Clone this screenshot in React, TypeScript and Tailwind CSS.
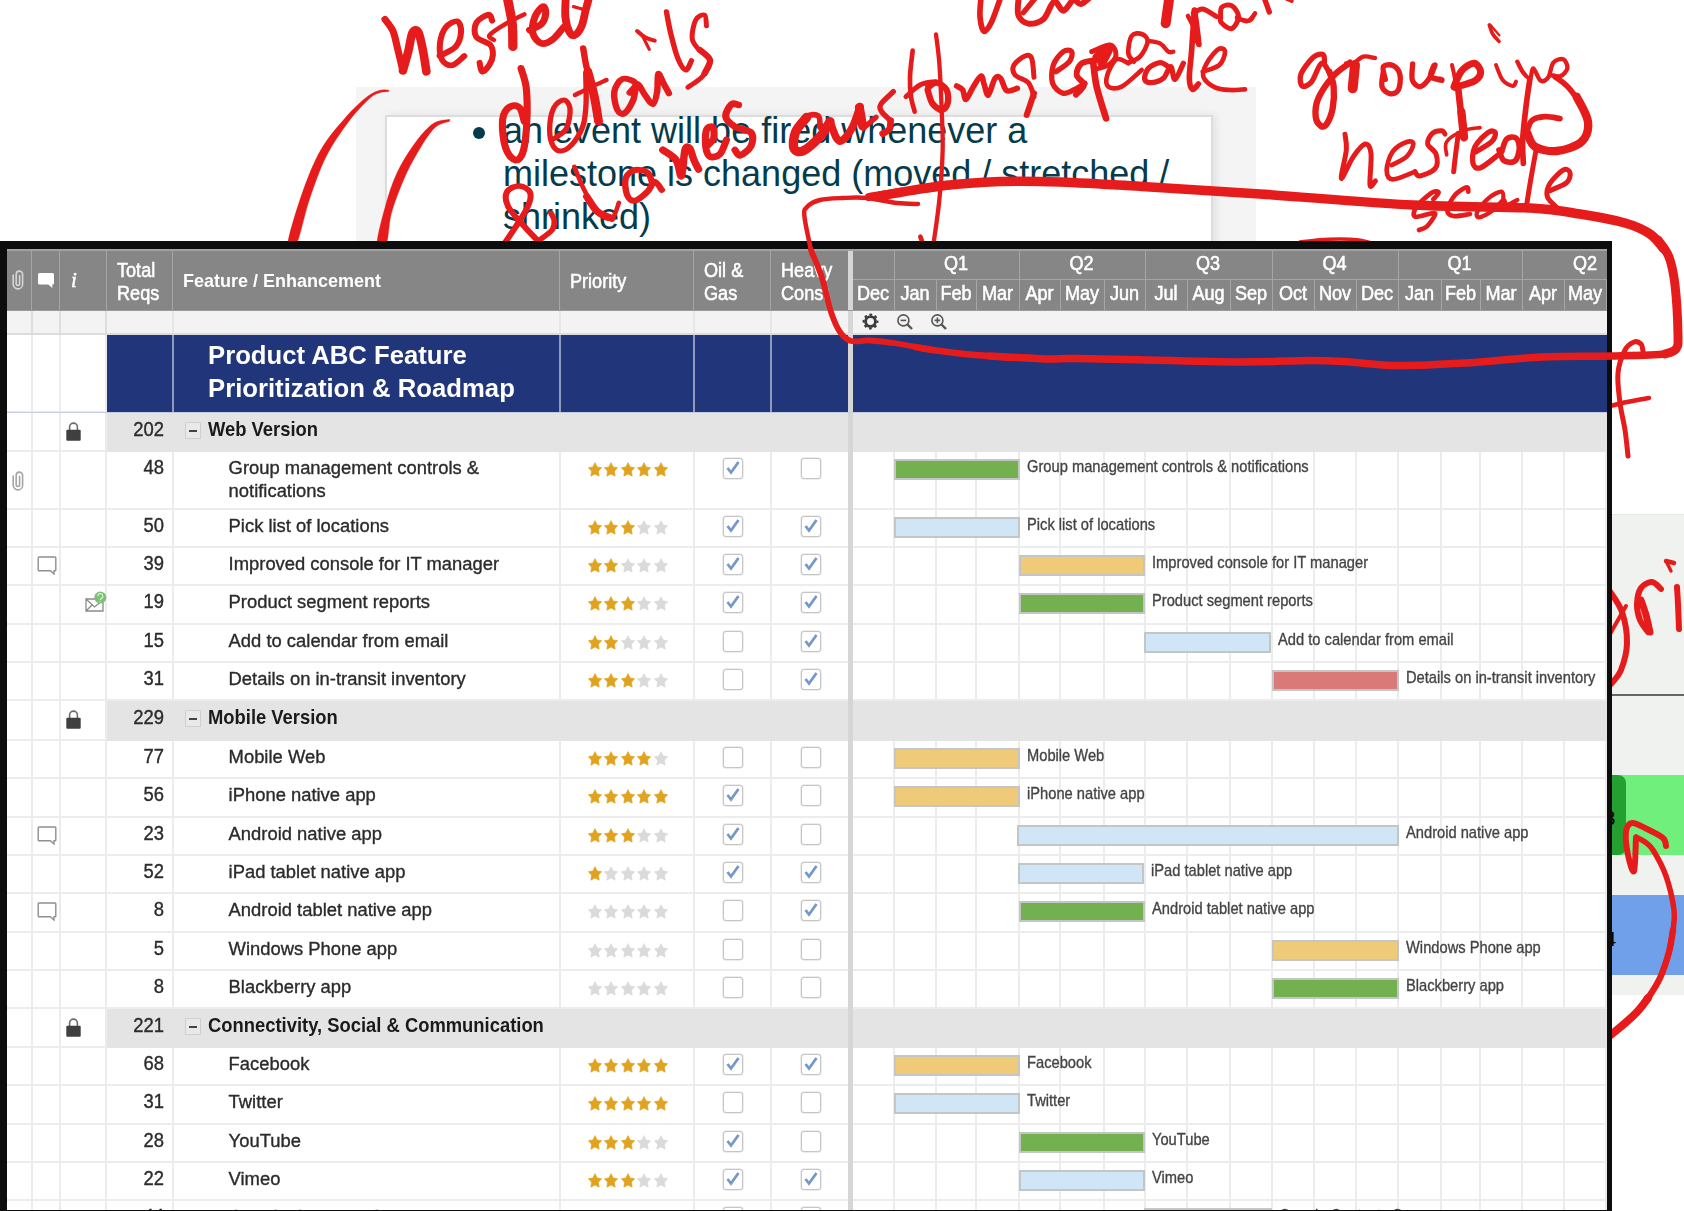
import React from "react";

/* ---------- data ---------- */

type Color = "green" | "blue" | "yellow" | "red";
type Row = {
  kind: "section" | "item";
  h: number;
  reqs: string;
  name: string;
  stars?: number;
  oil?: boolean;
  heavy?: boolean;
  clip?: boolean;
  comment?: boolean;
  mail?: boolean;
  bar?: [number, number, Color];
};

const item = (
  h: number,
  reqs: string,
  name: string,
  stars: number,
  oil: boolean,
  heavy: boolean,
  bar: [number, number, Color],
  extra: Partial<Row> = {},
): Row => ({ kind: "item", h, reqs, name, stars, oil, heavy, bar, ...extra });

const section = (h: number, reqs: string, name: string): Row => ({ kind: "section", h, reqs, name });

const rows: Row[] = [
  section(39, "202", "Web Version"),
  item(58, "48", "Group management controls & notifications", 5, true, false, [894, 1019, "green"], { clip: true }),
  item(38, "50", "Pick list of locations", 3, true, true, [894, 1019, "blue"]),
  item(38, "39", "Improved console for IT manager", 2, true, true, [1019, 1144, "yellow"], { comment: true }),
  item(39, "19", "Product segment reports", 3, true, true, [1019, 1144, "green"], { mail: true }),
  item(38, "15", "Add to calendar from email", 2, false, true, [1144, 1270, "blue"]),
  item(38, "31", "Details on in-transit inventory", 3, false, true, [1272, 1398, "red"]),
  section(40, "229", "Mobile Version"),
  item(38, "77", "Mobile Web", 4, false, false, [894, 1019, "yellow"]),
  item(39, "56", "iPhone native app", 5, true, false, [894, 1019, "yellow"]),
  item(38, "23", "Android native app", 3, true, false, [1017, 1398, "blue"], { comment: true }),
  item(38, "52", "iPad tablet native app", 1, true, true, [1018, 1143, "blue"]),
  item(39, "8", "Android tablet native app", 0, false, true, [1019, 1144, "green"], { comment: true }),
  item(38, "5", "Windows Phone app", 0, false, false, [1272, 1398, "yellow"]),
  item(38, "8", "Blackberry app", 0, false, false, [1272, 1398, "green"]),
  section(39, "221", "Connectivity, Social & Communication"),
  item(38, "68", "Facebook", 5, true, true, [894, 1019, "yellow"]),
  item(39, "31", "Twitter", 5, false, false, [894, 1019, "blue"]),
  item(38, "28", "YouTube", 3, true, false, [1019, 1144, "green"]),
  item(38, "22", "Vimeo", 3, true, true, [1019, 1144, "blue"]),
  item(39, "44", "Google Contacts Sync", 3, false, false, [1144, 1271, "green"]),
];

const months: [string, number][] = [
  ["Dec", 42], ["Jan", 42], ["Feb", 40], ["Mar", 43], ["Apr", 41], ["May", 44],
  ["Jun", 41], ["Jul", 42], ["Aug", 43], ["Sep", 42], ["Oct", 42], ["Nov", 42],
  ["Dec", 42], ["Jan", 43], ["Feb", 39], ["Mar", 42], ["Apr", 42], ["May", 42],
];
const quarters: [string, number][] = [
  ["", 42], ["Q1", 125], ["Q2", 126], ["Q3", 127], ["Q4", 126], ["Q1", 124], ["Q2", 127],
];

const barColor: Record<Color, string> = {
  green: "bg-[#73b04f]",
  blue: "bg-[#d0e5f6]",
  yellow: "bg-[#efcb79]",
  red: "bg-[#da7a78]",
};

/* ---------- icons ---------- */

const Clip = ({ className }: { className: string }) => (
  <svg viewBox="0 0 12 20" className={className} fill="none" stroke="currentColor" strokeWidth="1.6" strokeLinecap="round">
    <path d="M1.2 5v9.200a4.700 4.700 0 0 0 9.400 0V4.300a3.200 3.200 0 0 0-6.400 0v9.400a1.700 1.700 0 0 0 3.400 0V5.600" />
  </svg>
);
const CommentSolid = () => (
  <svg viewBox="0 0 16 15" className="h-[15px] w-[16px] text-white" fill="currentColor">
    <path d="M1.5 0h13Q16 0 16 1.5v8.700Q16 11.500 14.500 11.500h-.2V15l-4-3.500H1.500Q0 11.500 0 10V1.500Q0 0 1.500 0Z" />
  </svg>
);
const CommentOutline = () => (
  <svg viewBox="0 0 20 19" className="h-[19px] w-[20px]" fill="none" stroke="#8f8f8f" strokeWidth="1.400">
    <path d="M2 1h16q.8 0 .8.800V14q0 .800-.800.800h-1V18l-3.600-3.200H2q-.8 0-.8-.8V1.800Q1.200 1 2 1Z" />
  </svg>
);
const Lock = () => (
  <svg viewBox="0 0 15 19" className="h-[19px] w-[15px]">
    <path d="M3.600 9V5a3.900 3.900 0 0 1 7.800 0v4" fill="none" stroke="#6b6b6b" strokeWidth="1.600" />
    <rect x="0.300" y="7.800" width="14.400" height="11" rx="1" fill="#3f3f3f" />
  </svg>
);
const Mail = () => (
  <svg viewBox="0 0 22 21" className="h-[21px] w-[22px]" fill="none">
    <path d="M1 8h17v12H1zM1 8l8.500 8L18 9M1 20l6-6" stroke="#8a8a8a" strokeWidth="1.300" />
    <circle cx="15.300" cy="6.500" r="6" fill="#80bf78" />
    <path d="M12.800 5.200a2.500 2.500 0 1 1 3.600 2.200q-1.100.600-1.100 1.600M15.300 10.300v.8" stroke="#d8efd5" strokeWidth="1.200" />
  </svg>
);
const Star = ({ on }: { on: boolean }) => (
  <svg
    viewBox="0 0 24 24"
    className="h-[15px] w-[14px]"
    preserveAspectRatio="none"
    fill={on ? "#e0a320" : "#dadada"}
    stroke={on ? "#e0a320" : "#dadada"}
    strokeWidth="1.200"
    strokeLinejoin="round"
  >
    <path d="M12 1l3.600 7 7.700 1.100-5.500 5.500 1.300 8L12 19 4.900 22.600l1.300-8-5.500-5.500L8.400 8Z" />
  </svg>
);
const Gear = () => (
  <svg viewBox="0 0 18 18" className="h-[17px] w-[17px]" fill="none" stroke="#3c3c3c">
    <circle cx="9" cy="9" r="5.200" strokeWidth="3" />
    <circle cx="9" cy="9" r="7.300" strokeWidth="2.200" strokeDasharray="2.870 2.870" strokeDashoffset="1.400" />
  </svg>
);
const Magnifier = ({ plus }: { plus?: boolean }) => (
  <svg viewBox="0 0 16 16" className="h-4 w-4" fill="none" stroke="#555" strokeWidth="1.600">
    <circle cx="6.400" cy="6.400" r="5.500" />
    <path d="M10.500 10.500l4.500 4.500" strokeWidth="2.400" />
    <path d={plus ? "M3.600 6.400h5.600M6.400 3.600v5.600" : "M3.600 6.400h5.600"} />
  </svg>
);

const Check = ({ on }: { on?: boolean }) => (
  <div className="mt-[5.500px] flex h-[21.500px] w-[20px] items-center justify-center rounded-[3px] border-[1.500px] border-[#c6c6c6] bg-white shadow-[0_0_0_0.500px_#dcdcdc]">
    {on && (
      <svg viewBox="0 0 14 14" className="h-[14px] w-[14px]" fill="none" stroke="#7598cb" strokeWidth="2.800">
        <path d="M1.500 7l3.500 4.500L12.500 1" />
      </svg>
    )}
  </div>
);

/* ---------- spreadsheet ---------- */

const T = ({ children, className = "" }: { children: React.ReactNode; className?: string }) => (
  <span className={`block scale-y-[1.070] whitespace-nowrap ${className}`}>{children}</span>
);

const line = "shrink-0 border-r-2 border-[#ececec]";

function GridRow({ row }: { row: Row }) {
  const isSection = row.kind === "section";
  const left = row.bar ? row.bar[0] - 853 : 0;
  return (
    <div className="flex shrink-0" style={{ height: row.h }}>
      <div className={`${line} w-[26px] border-b-2 ${row.clip ? "pt-[19px] pl-[5px]" : ""}`}>
        {row.clip && <Clip className="h-[20px] w-[12px] text-[#a5a5a5]" />}
      </div>
      <div className={`${line} w-[28px] border-b-2 pt-[8px] pl-[4px]`}>{row.comment && <CommentOutline />}</div>
      <div className={`${line} w-[46px] border-b-2`}>
        {isSection && <div className="pt-[9px] pl-[4.500px]"><Lock /></div>}
        {row.mail && <div className="pt-[5px] pl-[24px]"><Mail /></div>}
      </div>
      {isSection ? (
        <>
          <div className="flex w-[741px] shrink-0 bg-[#e4e4e4] text-[18.400px] leading-[22px]">
            <div className="w-[57px] pt-[6px] text-right text-[#2b2b2b] [-webkit-text-stroke:0.350px_#2b2b2b]"><T>{row.reqs}</T></div>
            <div className="mt-[9px] ml-[21px] flex h-[17px] w-[16px] items-center justify-center border border-[#cfcfcf] bg-[#e9e9e9]">
              <div className="h-[2px] w-[8px] bg-[#444]" />
            </div>
            <div className="ml-[7px] pt-[6px] font-bold text-[#1a1a1a]"><T>{row.name}</T></div>
          </div>
          <div className="w-[5px] shrink-0 bg-[#d6d6d6]" />
          <div className="grow bg-[#e4e4e4]" />
        </>
      ) : (
        <>
          <div className={`${line} w-[67px] border-b-2 pt-[5px] pr-[8px] text-right text-[18.400px] leading-[22px] text-[#2b2b2b] [-webkit-text-stroke:0.350px_#2b2b2b]`}>
            <T>{row.reqs}</T>
          </div>
          <div className={`${line} w-[387px] border-b-2 pt-[5px] pl-[54.600px] text-[18.400px] leading-[21.500px] text-[#2b2b2b] [-webkit-text-stroke:0.350px_#2b2b2b]`}>
            <span className="block w-[280px] scale-y-[1.040]">{row.name}</span>
          </div>
          <div className={`${line} flex w-[134px] gap-[2.500px] border-b-2 pt-[10px] pl-[26.500px]`}>
            {[0, 1, 2, 3, 4].map((i) => <Star key={i} on={i < (row.stars ?? 0)} />)}
          </div>
          <div className={`${line} w-[77px] border-b-2 pl-[28px]`}><Check on={row.oil} /></div>
          <div className="w-[76px] shrink-0 border-b-2 border-[#ececec] pl-[28.500px]"><Check on={row.heavy} /></div>
          <div className="w-[5px] shrink-0 bg-[#d6d6d6]" />
          <div className="relative grow">
            <div className="absolute inset-0 flex">
              {months.map(([, w], i) => (
                <div key={i} className="shrink-0 border-r-2 border-b-2 border-[#ececec]" style={{ width: w }} />
              ))}
            </div>
            {row.bar && (
              <div className="relative flex pt-[7px]" style={{ marginLeft: left }}>
                <div
                  className={`h-[21px] shrink-0 border-2 border-[#c3c6c5] ${barColor[row.bar[2]]}`}
                  style={{ width: row.bar[1] - row.bar[0] + 1 }}
                />
                <T className="ml-[7px] text-[14.700px] leading-[17px] text-[#444] [-webkit-text-stroke:0.300px_#444]">{row.name}</T>
              </div>
            )}
          </div>
        </>
      )}
    </div>
  );
}

function Sheet() {
  const hl = "shrink-0 border-r border-[#a6a6a6]";
  const tl = "shrink-0 border-r-2 border-[#e6e6e6]";
  const bl = "shrink-0 border-r-2 border-[#8f9ac0] bg-[#20357a]";
  return (
    <div className="flex h-[961px] w-[1600px] flex-col overflow-hidden bg-white blur-[0.650px]">
      <div className="flex h-[62px] shrink-0 border-t-2 border-b border-t-[#a3a3a3] border-b-[#9a9a9a] bg-[#868686] text-[18.100px] leading-[22px] text-white [-webkit-text-stroke:0.500px_white]">
        <div className={`${hl} w-[25px] pt-[19px] pl-[5px]`}><Clip className="h-[20px] w-[12px] text-[#d5d5d5]" /></div>
        <div className={`${hl} w-[28px] pt-[22px] pl-[6px]`}><CommentSolid /></div>
        <div className={`${hl} w-[47px] pt-[18px] pl-[11px] font-['Liberation_Serif',serif] text-[21px] italic`}>i</div>
        <div className={`${hl} w-[66px] pt-[8.500px] pl-[10px]`}><T>Total<br />Reqs</T></div>
        <div className={`${hl} w-[387px] pt-[19px] pl-[10px] text-[18px] font-bold [-webkit-text-stroke:0]`}><T>Feature / Enhancement</T></div>
        <div className={`${hl} w-[134px] pt-[19.500px] pl-[10px]`}><T>Priority</T></div>
        <div className={`${hl} w-[77px] pt-[8.500px] pl-[10px]`}><T>Oil &amp;<br />Gas</T></div>
        <div className="w-[77px] shrink-0 pt-[8.500px] pl-[10px]"><T>Heavy<br />Const</T></div>
        <div className="w-[5px] shrink-0 bg-[#d6d6d6]" />
        <div className="flex grow flex-col">
          <div className="flex h-[29px] shrink-0 border-b border-[#a6a6a6]">
            {quarters.map(([q, w], i) => (
              <div key={i} className={`${hl} pt-[2px] pr-[2px] text-center`} style={{ width: w }}><T>{q}</T></div>
            ))}
          </div>
          <div className="flex grow">
            {months.map(([m, w], i) => (
              <div key={i} className={`${hl} flex justify-center pt-[3px] pr-px`} style={{ width: w }}><T>{m}</T></div>
            ))}
          </div>
        </div>
      </div>

      <div className="flex h-[24px] shrink-0 border-b-2 border-[#dcdcdc] bg-[#f3f3f3]">
        <div className="w-[26px] shrink-0 border-r-2 border-[#dedede]" />
        <div className="w-[28px] shrink-0 border-r-2 border-[#dedede]" />
        <div className="w-[46px] shrink-0 border-r-2 border-[#dedede]" />
        <div className={`${tl} w-[67px]`} />
        <div className={`${tl} w-[387px]`} />
        <div className={`${tl} w-[134px]`} />
        <div className={`${tl} w-[77px]`} />
        <div className="w-[76px] shrink-0" />
        <div className="w-[5px] shrink-0 bg-[#d6d6d6]" />
        <div className="flex items-center gap-[18px] pb-px pl-[8.500px]"><Gear /><Magnifier /><Magnifier plus /></div>
      </div>

      <div className="flex h-[78px] shrink-0 border-b border-[#c5cbe0]">
        <div className={`${line} w-[26px] border-b`} />
        <div className={`${line} w-[28px] border-b`} />
        <div className={`${line} w-[46px] border-b`} />
        <div className={`${bl} w-[67px]`} />
        <div className={`${bl} w-[387px] pt-[4px] pl-[34px] text-[25.700px] leading-[32px] font-bold text-white`}>
          <span className="block scale-y-[1.030] whitespace-nowrap">Product ABC Feature<br />Prioritization &amp; Roadmap</span>
        </div>
        <div className={`${bl} w-[134px]`} />
        <div className={`${bl} w-[77px]`} />
        <div className="w-[76px] shrink-0 bg-[#20357a]" />
        <div className="w-[5px] shrink-0 bg-[#d6d6d6]" />
        <div className="grow bg-[#20357a]" />
      </div>

      {rows.map((r, i) => <GridRow key={i} row={r} />)}
    </div>
  );
}

/* ---------- pen annotations ---------- */

type Stroke = [number, string];

/** Smooth (Catmull-Rom) path through "x,y x,y ..." points. */
function smooth(src: string) {
  const p = src.split(" ").map((s) => s.split(",").map(Number));
  let d = `M${p[0][0]} ${p[0][1]}`;
  for (let i = 0; i < p.length - 1; i++) {
    const a = p[i - 1] ?? p[i];
    const b = p[i];
    const c = p[i + 1];
    const e = p[i + 2] ?? c;
    d += `C${b[0] + (c[0] - a[0]) / 6} ${b[1] + (c[1] - a[1]) / 6} ${c[0] - (e[0] - b[0]) / 6} ${c[1] - (e[1] - b[1]) / 6} ${c[0]} ${c[1]}`;
  }
  return d;
}

/** Tapered swooshes beside the slide, drawn as closed shapes. */
const swooshes = [
  "360,270 335,271 298,292 240,352 170,450 118,580 78,730 103,730 138,600 185,470 248,365 306,296 335,278 360,275",
  "531,358 483,372 430,435 383,520 352,615 328,730 354,730 368,640 402,540 440,460 488,385 531,364",
];

const detailsInk: Stroke[] = [
  [20, "350,58 372,92 384,140 400,212"],
  [24, "400,212 415,155 427,98 443,96 456,150 466,215"],
  [17, "503,168 548,140 563,95 552,64 520,82 504,130 510,180 538,196 572,168"],
  [17, "650,62 640,44 606,68 605,110 645,135 652,165 642,195 622,215 615,188"],
  [26, "692,-10 706,70 708,140"],
  [13, "740,43 690,70 643,105 655,120"],
  [20, "755,90 788,72 800,40 792,20 770,50 764,100 788,130 820,118 850,82"],
  [22, "856,-10 855,50 865,93 880,106 900,80 912,30 922,-10"],
  [10, "878,20 905,28"],
  [20, "731,205 745,260 748,340 743,420 733,465 715,480 692,455 680,400 682,345 705,318 728,325 740,365"],
  [15, "825,415 858,385 868,325 850,300 822,325 811,390 822,440 848,452 880,425 905,375 913,310 912,220"],
  [18, "905,145 914,200 928,250"],
  [25, "918,215 936,290 948,364"],
  [13, "882,285 925,262 970,240"],
  [18, "1035,278 1052,250 1015,237 992,275 1000,328 1020,340 1045,300 1056,252 1078,285 1100,312 1112,275 1115,222 1130,250 1145,280"],
  [12, "1056,93 1078,112 1105,122"],
  [9, "1072,110 1090,148"],
  [15, "1138,35 1150,100 1170,175 1192,210 1208,182"],
  [14, "1250,78 1245,45 1220,60 1210,115 1228,148 1260,180 1240,228 1198,262"],
  [18, "1232,150 1260,180 1245,220"],
  [17, "682,735 745,630 757,580 727,558 692,575 695,620 745,685 790,735"],
  [16, "780,722 818,690 824,662 815,640"],
  [13, "880,500 908,570 945,638 985,655 1005,608"],
  [21, "915,590 945,635 985,655"],
  [18, "1098,548 1085,518 1050,510 1024,535 1028,585 1050,602 1085,575 1105,545 1125,570"],
  [21, "1128,450 1165,480 1180,528 1190,450 1203,445 1215,480 1228,508"],
  [20, "1250,440 1270,415 1268,382 1250,390 1248,440 1260,470 1288,462 1306,420"],
  [20, "1340,315 1320,313 1304,350 1330,380 1375,398 1375,438 1345,466 1330,450"],
];

const scaleInk: Stroke[] = [
  [17, "603,-8 600,50 612,94 635,65 662,-8"],
  [16, "730,38 768,-8"],
  [18, "716,-8 715,45 745,71 790,58 822,5 850,32 880,0 902,12 930,-8"],
  [30, "1168,-8 1157,70"],
  [14, "1224,48 1245,90 1258,135 1252,80 1245,30"],
  [17, "1242,95 1256,132"],
  [15, "1240,40 1268,27 1310,50"],
  [15, "1322,55 1325,22 1355,17 1376,50 1355,86 1324,68 1322,50"],
  [12, "1370,52 1402,64 1425,40"],
  [17, "120,382 115,348 80,350 45,395"],
  [28, "80,352 47,395 42,445 70,452 120,410 150,365"],
  [23, "150,365 170,415 188,420 218,380 240,320"],
  [27, "238,322 248,378"],
  [16, "250,385 288,352"],
  [16, "340,275 303,312 305,335 332,362"],
  [20, "332,362 328,388 308,401"],
  [14, "398,152 390,230 393,290 404,335"],
  [15, "378,290 420,255 465,245"],
  [19, "445,262 470,248 500,270 503,310 485,330 457,310 443,270"],
  [13, "468,103 478,190 485,330 488,450 478,600 460,735"],
  [14, "421,710 430,735"],
  [17, "530,258 548,270 558,298 580,260 603,228 613,255 625,285 645,235 662,235 680,272 712,265"],
  [15, "762,232 755,175 735,168 702,195 705,225 745,248 762,290"],
  [18, "762,280 740,345"],
  [16, "828,215 868,185 875,155 850,155 820,195 818,250 850,280 890,265 915,250"],
  [18, "888,284 912,255 890,225 905,190 950,180"],
  [15, "935,155 990,135 1008,165 985,195 945,208"],
  [26, "950,172 988,142 965,190"],
  [20, "940,190 950,260 978,355"],
  [14, "1045,190 1010,178 982,225 985,260 1025,260 1085,210"],
  [14, "1062,185 1045,160 1055,108 1085,102 1103,125 1080,170 1045,188"],
  [13, "1103,122 1140,130 1165,155 1180,155"],
  [16, "1165,200 1140,188 1105,205 1094,238 1115,248 1150,235 1172,200 1185,238 1210,190"],
  [17, "1243,30 1235,150 1228,235 1238,268 1255,252"],
  [14, "1268,215 1318,195 1335,155 1315,148 1280,190 1270,230 1305,262 1350,270 1395,268"],
];

const groupingInk: Stroke[] = [
  [13, "-8,55 28,62 45,40"],
  [16, "72,-8 88,36"],
  [12, "138,-5 155,3"],
  [16, "253,192 250,164 220,172 183,222 187,258 215,245 245,190 272,225"],
  [19, "268,215 281,260 278,325 260,372 243,378 227,350 235,295 280,228 330,188"],
  [30, "345,195 338,265"],
  [13, "318,190 340,190 370,170 405,174"],
  [16, "436,238 430,200 460,197 480,225 475,270 450,281 426,260 430,215"],
  [16, "518,192 517,240 540,260 568,235 585,195"],
  [18, "582,198 573,230 605,240"],
  [12, "636,195 645,240 640,265"],
  [21, "642,260 665,212 702,190 722,215 705,242 645,262"],
  [20, "655,268 662,330 670,380"],
  [25, "664,335 672,412"],
  [12, "768,195 788,240 818,258 828,245"],
  [11, "748,75 758,102 777,124"],
  [7, "752,75 778,106"],
  [13, "832,185 850,218 870,235 880,205 902,242 925,232 940,188 970,178 982,205 962,228 932,225"],
  [17, "945,230 985,262 1025,315"],
  [25, "1010,290 1044,365 1025,425 950,453 885,440 862,400"],
  [17, "858,405 875,362 915,350 960,356"],
  [17, "870,235 858,320 848,420 850,490"],
  [15, "890,440 872,540 860,615"],
  [15, "315,403 319,450 304,535 340,470 375,432 393,460 390,555 406,543"],
  [14, "455,495 500,470 520,432 500,426 458,455 440,510 458,538 525,515"],
  [15, "615,402 605,392 577,400 563,432 588,462 586,505 540,528 525,515"],
  [15, "655,400 646,470 641,515"],
  [11, "620,465 620,425 670,392 720,383"],
  [16, "708,455 755,425 766,398 745,397 705,440 699,490 722,503 780,460"],
  [17, "785,455 800,417 828,414 838,445 825,483 792,482 777,450"],
  [14, "580,598 596,578 575,578 530,620 525,650 575,640 585,645 560,680 537,690"],
  [14, "685,575 680,562 645,585 622,630 640,648 690,642"],
  [13, "790,605 785,575 745,595 712,635 718,652 760,630 790,600 800,615 832,600"],
  [15, "930,572 980,548 990,518 970,510 930,550 922,590 950,622"],
  [10, "180,726 240,719 300,717 350,719 395,728"],
];

const sideInk: Stroke[] = [
  [5, "1643,351 1641,344 1634,342 1625,350 1618,373 1620,403 1625,430 1628,456"],
  [4.500, "1610,406 1627,402 1649,398"],
  [6, "1609,590 1622,612 1627,643 1621,670 1611,684"],
  [4, "1610,634 1626,606"],
  [6, "1661,589 1652,582 1641,588 1637,604 1640,620 1648,632"],
  [7, "1650,632 1646,615 1641,600"],
  [6, "1677,587 1678,604 1679,629"],
  [4.500, "1666,561 1674,563"],
  [3.500, "1666,561 1671,571"],
  [8, "1600,1042 1612,1034 1636,1013 1648,998"],
  [6.500, "1636,1013 1648,998 1660,978 1669,952 1673,930"],
  [5.500, "1669,952 1673,930 1674,910 1666,876 1653,850 1645,842 1636,837"],
  [6, "1636,838 1634,871 1628,855 1626,832 1632,823 1647,829 1663,838 1666,846"],
];

const calloutInk: Stroke[] = [
  [8, "869,197 900,192 940,187"],
  [9.500, "880,196 940,186 1000,181.500 1060,182 1150,187 1260,194 1413,205 1530,208 1580,214 1625,223 1650,234 1664,249"],
  [9, "1658,240 1669,257 1675,285 1678,335 1676,349 1665,354"],
  [7.500, "1676,349 1665,354 1612,356 1542,357 1465,363 1396,365.500 1350,362 1311,360.500 1234,362 1080,358.500 1050,359 990,356"],
  [6.500, "1010,357.500 970,354.500 933,350 915,347"],
  [5.800, "940,351 933,350 897,343.500 870,340.500 851,341 840,332 831,312 822,278 811,250"],
  [4.500, "812,255 804.500,217 807,207 820,200 843,198 867,198 897,203 918,204"],
];

const Strokes = ({ list, transform }: { list: Stroke[]; transform?: string }) => (
  <g transform={transform}>
    {list.map(([w, pts], i) => <path key={i} d={smooth(pts)} strokeWidth={w} />)}
  </g>
);

/* ---------- page ---------- */

export default function App() {
  return (
    <div className="relative h-[1211px] w-[1684px] overflow-hidden bg-white font-['Liberation_Sans',Arial,sans-serif]">
      {/* slide in the background */}
      <div className="absolute top-[87px] left-[356px] h-[200px] w-[900px] bg-[#f4f4f4] pt-[28px] pr-[43px] pl-[29px]">
        <div className="h-full border-2 border-[#dddddd] bg-white pl-[116px] shadow-[3px_0_8px_rgba(0,0,0,0.080)]">
          <div className="relative -mt-[8px] text-[36px] leading-[43px] whitespace-nowrap text-[#053b4c]">
            <div className="absolute top-[18px] -left-[30px] h-[12px] w-[12px] rounded-full bg-[#053b4c]" />
            an event will be fired whenever a<br />
            milestone is changed (moved / stretched /<br />
            shrinked)
          </div>
        </div>
      </div>

      {/* board at the right edge */}
      <div className="absolute top-[514px] left-[1600px] flex h-[481px] w-[84px] flex-col border-t border-[#e6e8e5] bg-[#eff2ef] text-[21px] text-black">
        <div className="mt-[179px] h-[2px] bg-[#666]" />
        <div className="mt-[79px] flex h-[80px] bg-[#70ef7c]">
          <div className="flex w-[25.500px] items-center justify-end rounded-r-[8px] bg-[#23a030] pt-[5px] pr-[10px]">3</div>
        </div>
        <div className="mt-[40px] flex h-[80px] items-center bg-[#70a0e9] pt-[7px] pl-[4.500px]">4</div>
      </div>

      <svg className="absolute inset-0 h-full w-full" fill="none" stroke="#e61c1c" strokeLinecap="round" strokeLinejoin="round">
        <g transform="translate(260 0) scale(0.35714 0.33333)" fill="#e61c1c" strokeWidth="1">
          {swooshes.map((s) => <path key={s} d={smooth(s) + "Z"} />)}
        </g>
        <Strokes list={detailsInk} transform="translate(260 0) scale(0.35714 0.33333)" />
        <Strokes list={scaleInk} transform="translate(780 0) scale(0.33333)" />
        <Strokes list={groupingInk} transform="translate(1240 0) scale(0.33333)" />
        <Strokes list={sideInk} />
      </svg>

      {/* roadmap window */}
      <div className="absolute top-[241px] left-0 h-[970px] w-[1612px] overflow-hidden border-t-[8px] border-r-[5px] border-b border-l-[7px] border-[#0d0d0d] bg-white">
        <Sheet />
      </div>

      <svg className="absolute inset-0 h-full w-full" fill="none" stroke="#e61c1c" strokeLinecap="round" strokeLinejoin="round">
        <Strokes list={calloutInk} />
      </svg>
    </div>
  );
}
